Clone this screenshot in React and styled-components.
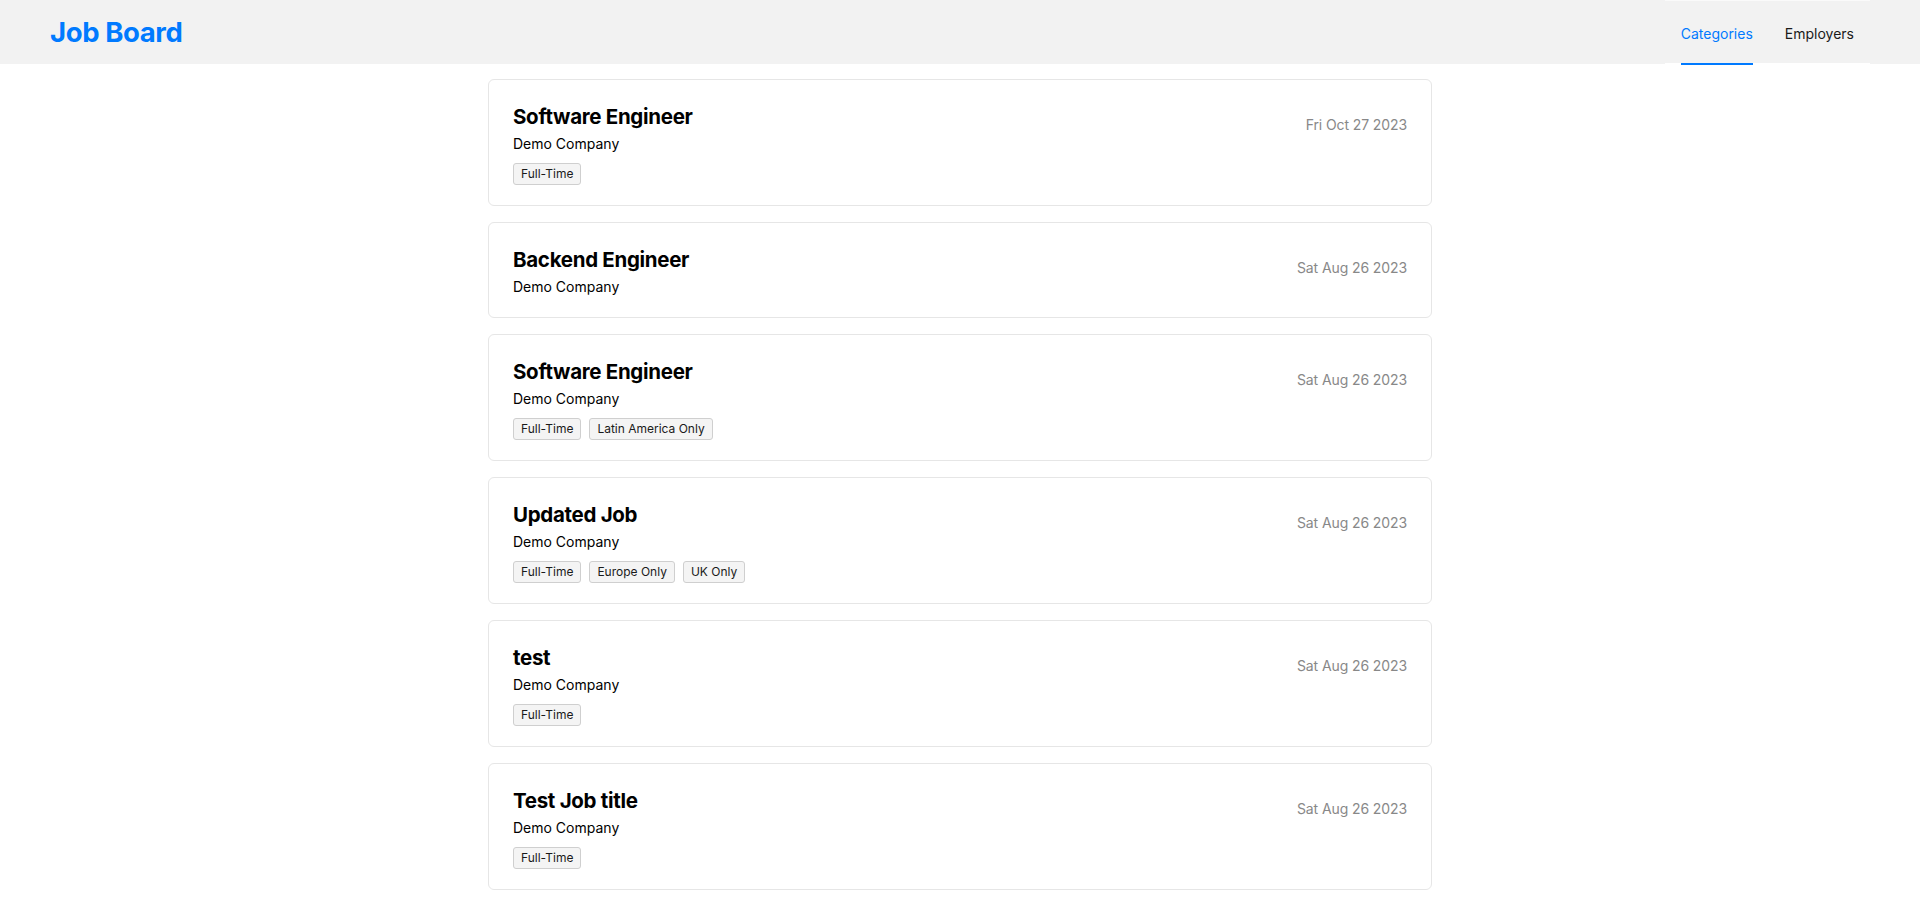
import React from 'react'
import styled, {createGlobalStyle} from 'styled-components'

const GlobalStyle = createGlobalStyle`
    body {
        margin: 0;
        background: #ffffff;
        font-family: Inter, "Noto Sans", sans-serif;
        color: #000;
    }
`

const Header = styled.header`
    height: 64px;
    background: #f2f2f2;
    display: flex;
    align-items: stretch;
    justify-content: space-between;
    padding: 0 50px;
    box-sizing: border-box;
`

const Logo = styled.a`
    display: flex;
    align-items: center;
    font-size: 27.5px;
    font-weight: 700;
    letter-spacing: -0.4px;
    color: #007aff;
    text-decoration: none;
`

const Nav = styled.nav`
    display: flex;
    align-items: stretch;
    padding: 0 16px;
    border-top: 1px solid #fafafa;
    border-bottom: 1px solid #ffffff;
`

const NavLink = styled.a`
    display: flex;
    align-items: center;
    margin: 0 16px -2px;
    padding-top: 2px;
    font-size: 14px;
    color: ${props => props.active ? '#007aff' : '#1a1a1a'};
    border-bottom: 2px solid ${props => props.active ? '#007aff' : 'transparent'};
    text-decoration: none;
    &:first-child {
        margin-left: 0;
    }
    &:last-child {
        margin-right: 0;
    }
`

const List = styled.main`
    width: 944px;
    margin: 15px auto 0;
    display: flex;
    flex-direction: column;
    gap: 16px;
`

const Card = styled.div`
    border: 1px solid #e6e6e6;
    border-radius: 6px;
    padding: 22px 24px 20px;
    display: flex;
    justify-content: space-between;
    align-items: flex-start;
`

const Title = styled.h2`
    margin: 0;
    font-size: 20.5px;
    line-height: 30px;
    font-weight: 700;
    letter-spacing: -0.3px;
`

const Company = styled.div`
    margin-top: 2px;
    font-size: 14px;
    line-height: 20px;
`

const Tags = styled.div`
    display: flex;
    gap: 8px;
    margin-top: 9px;
`

const Tag = styled.span`
    font-size: 12px;
    line-height: 20px;
    padding: 0 7px;
    border: 1px solid #cfcfcf;
    border-radius: 3px;
    background: #f4f4f4;
    color: #1a1a1a;
`

const Date = styled.div`
    margin-top: 13px;
    font-size: 14px;
    line-height: 20px;
    letter-spacing: -0.1px;
    color: #888888;
`

const jobs = [
    {title: 'Software Engineer', date: 'Fri Oct 27 2023', tags: ['Full-Time']},
    {title: 'Backend Engineer', date: 'Sat Aug 26 2023', tags: []},
    {title: 'Software Engineer', date: 'Sat Aug 26 2023', tags: ['Full-Time', 'Latin America Only']},
    {title: 'Updated Job', date: 'Sat Aug 26 2023', tags: ['Full-Time', 'Europe Only', 'UK Only']},
    {title: 'test', date: 'Sat Aug 26 2023', tags: ['Full-Time']},
    {title: 'Test Job title', date: 'Sat Aug 26 2023', tags: ['Full-Time']},
]

export default function App() {
    return (
        <>
            <GlobalStyle/>
            <Header>
                <Logo href="#">Job Board</Logo>
                <Nav>
                    <NavLink href="#" active>Categories</NavLink>
                    <NavLink href="#">Employers</NavLink>
                </Nav>
            </Header>
            <List>
                {jobs.map((job, i) => (
                    <Card key={i}>
                        <div>
                            <Title>{job.title}</Title>
                            <Company>Demo Company</Company>
                            {job.tags.length > 0 && (
                                <Tags>
                                    {job.tags.map(t => <Tag key={t}>{t}</Tag>)}
                                </Tags>
                            )}
                        </div>
                        <Date>{job.date}</Date>
                    </Card>
                ))}
            </List>
        </>
    )
}
